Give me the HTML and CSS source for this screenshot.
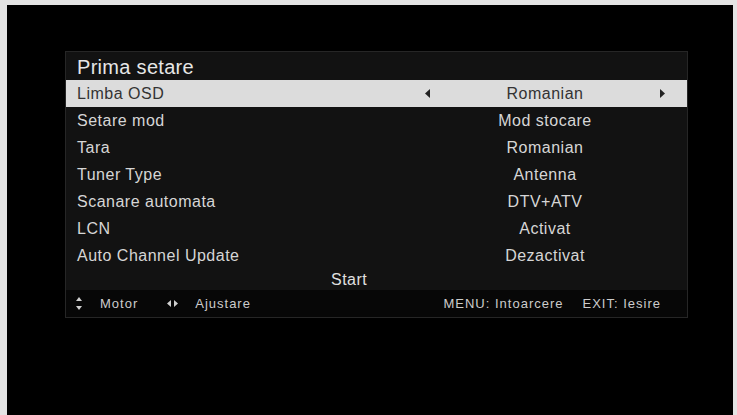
FILE: index.html
```html
<!DOCTYPE html>
<html lang="ro">

<head>
  <meta charset="UTF-8">
  <meta name="viewport" content="width=device-width, initial-scale=1.0">
  <title>Prima setare</title>
  <link rel="stylesheet" href="styles.css">
</head>

<body>
  <div class="screen">
    <div class="panel">
      <h1 class="title">Prima setare</h1>

      <div class="row active">
        <span class="label">Limba OSD</span>
        <span class="value">
          <svg class="arrow" width="5" height="9" viewBox="0 0 5 9"><path d="M5 0 L0 4.5 L5 9 Z" /></svg>
          <span>Romanian</span>
          <svg class="arrow" width="5" height="9" viewBox="0 0 5 9"><path d="M0 0 L5 4.5 L0 9 Z" /></svg>
        </span>
      </div>
      <div class="row">
        <span class="label">Setare mod</span>
        <span class="value"><span>Mod stocare</span></span>
      </div>
      <div class="row">
        <span class="label">Tara</span>
        <span class="value"><span>Romanian</span></span>
      </div>
      <div class="row">
        <span class="label">Tuner Type</span>
        <span class="value"><span>Antenna</span></span>
      </div>
      <div class="row">
        <span class="label">Scanare automata</span>
        <span class="value"><span>DTV+ATV</span></span>
      </div>
      <div class="row">
        <span class="label">LCN</span>
        <span class="value"><span>Activat</span></span>
      </div>
      <div class="row">
        <span class="label">Auto Channel Update</span>
        <span class="value"><span>Dezactivat</span></span>
      </div>

      <div class="start">Start</div>

      <div class="footer">
        <div class="hint">
          <svg class="updown" width="6" height="13" viewBox="0 0 6 13"><path d="M3 0 L6 4 L0 4 Z M0 9 L6 9 L3 13 Z" /></svg>
          <span>Motor</span>
        </div>
        <div class="hint">
          <svg class="leftright" width="11" height="7" viewBox="0 0 11 7"><path d="M4 0 L0 3.5 L4 7 Z M7 0 L11 3.5 L7 7 Z" /></svg>
          <span>Ajustare</span>
        </div>
        <div class="keys">
          <span>MENU: Intoarcere</span>
          <span>EXIT: Iesire</span>
        </div>
      </div>
    </div>
  </div>
</body>

</html>
```

FILE: styles.css
```css
* {
  margin: 0;
  box-sizing: border-box;
}

body {
  background: #e4e4e4;
  font-family: "Liberation Sans", Arial, sans-serif;
  overflow: hidden;
}

.screen {
  margin: 5px 4px 0 7px;
  height: 410px;
  background: #000;
  padding: 46px 0 0 58px;
}

.panel {
  width: 623px;
  background: #121212;
  border: 1px solid #262626;
  color: #d6d6d6;
}

.title {
  height: 28px;
  padding: 4px 0 0 11px;
  font-size: 20px;
  font-weight: normal;
  letter-spacing: 0.3px;
  line-height: 22px;
  color: #e6e6e6;
}

.row {
  display: grid;
  grid-template-columns: 356px 246px;
  height: 27px;
  align-items: center;
  font-size: 16px;
  letter-spacing: 0.5px;
}

.row.active {
  background: #dcdcdc;
  color: #333;
}

.label {
  padding-left: 11px;
}

.value {
  display: flex;
  justify-content: center;
  align-items: center;
  position: relative;
}

.value .arrow {
  fill: #222;
}

.value .arrow:first-child {
  position: absolute;
  left: 3px;
}

.value .arrow:last-child {
  position: absolute;
  right: 3px;
}

.start {
  height: 21px;
  padding: 2px 0 0 265px;
  font-size: 16px;
  letter-spacing: 0.5px;
  color: #e0e0e0;
}

.footer {
  display: flex;
  align-items: center;
  height: 27px;
  background: #070707;
  padding: 0 26px 0 10px;
  font-size: 13px;
  letter-spacing: 1px;
  color: #cccccc;
}

.hint {
  display: flex;
  align-items: center;
}

.hint svg {
  fill: #d0d0d0;
}

.updown {
  margin-right: 18px;
}

.hint:nth-child(2) {
  margin-left: 29px;
}

.leftright {
  margin-right: 17px;
}

.keys {
  margin-left: auto;
  display: flex;
  gap: 19px;
}
```
